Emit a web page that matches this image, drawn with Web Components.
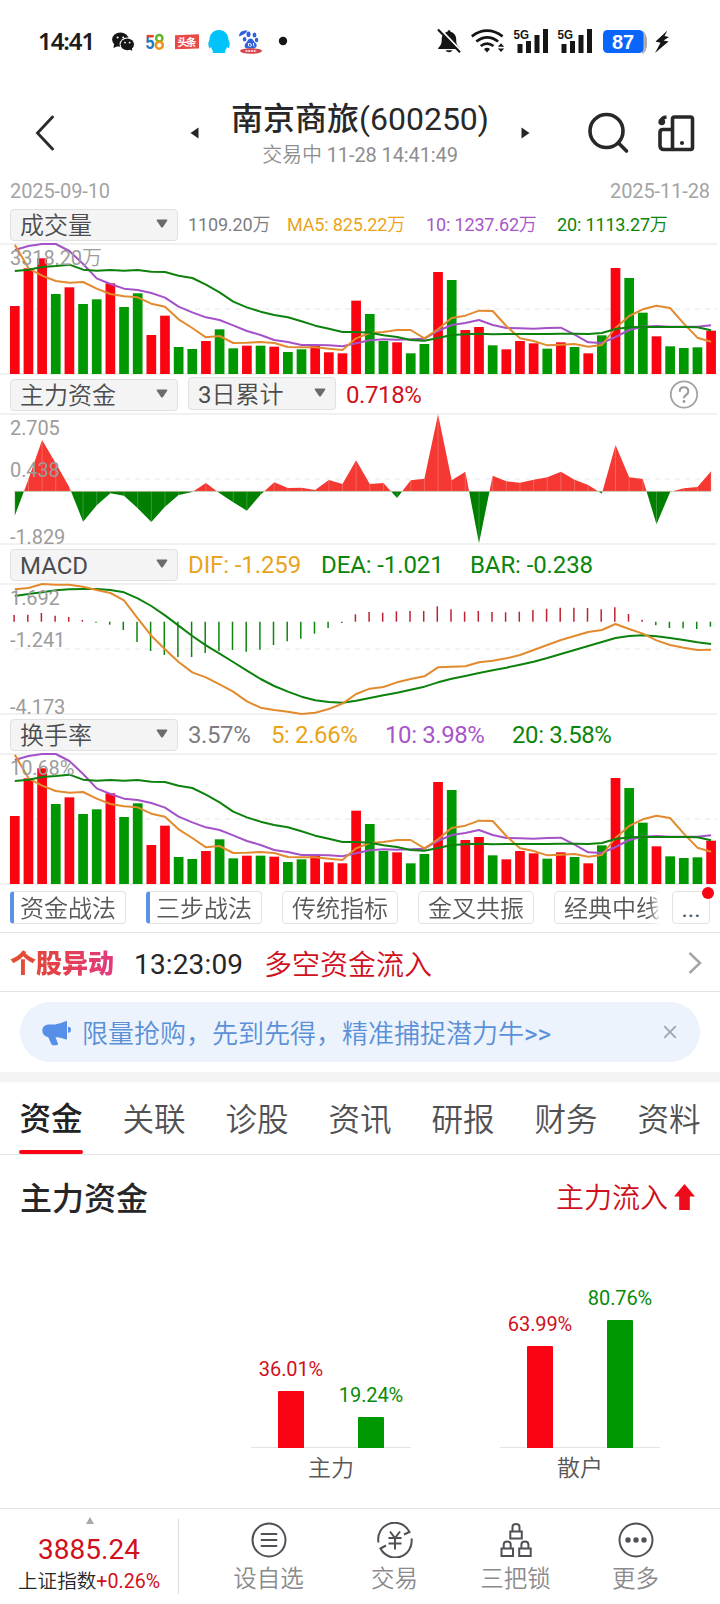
<!DOCTYPE html>
<html lang="zh-CN">
<head>
<meta charset="utf-8">
<title>南京商旅(600250)</title>
<style>
html,body{margin:0;padding:0;background:#fff}
body{width:720px;height:1604px;overflow:hidden;font-family:Roboto,"Noto Sans CJK SC DemiLight","Noto Sans CJK SC Light","Noto Sans CJK SC",sans-serif;color:#262628;-webkit-font-smoothing:antialiased}
</style>
</head>
<body>
<stock-page></stock-page>
<script>
const define = (name, css, html, after) => customElements.define(name, class extends HTMLElement {
  connectedCallback() {
    if (this.shadowRoot) return;
    const root = this.attachShadow({ mode: 'open' });
    const body = typeof html === 'function' ? html(this) : html;
    root.innerHTML = `<style>*{box-sizing:border-box}${css}</style>${body}`;
    if (after) after(root, this);
  }
});

/* ---------- series ---------- */
const STEP = 13.653, X0 = 14.8;
const nums = s => s.trim().split(/[\s,]+/).map(Number);
const VOL = 'R318 R205 R175 G282 R262 G312 G298 R250 G321 G280 R405 R347 G441 G447 R423 G388 G445 R437 G437 R440 G456 G448 R436 R457 R460 R302 G342 G423 R427 G460 G432 R216 G240 R390 R381 G436 R448 R423 R430 G446 R427 G441 R460 G406 R204 G234 G338 R409 G439 G444 G442 R392'.split(' ');
const MA5 = nums('134 205 227 243 248 246 266 282 289 292 311 320 358 384 412 408 429 428 426 429 441 442 442 446 450 415 399 396 390 390 415 388 354 347 332 333 378 415 423 436 434 432 440 435 384 348 328 317 324 371 413 425');
const MA10 = nums('150 138 132 132 153 192 235 252 266 270 279 293 320 337 352 360 376 393 405 420 426 435 435 436 439 430 421 418 419 418 416 393 375 369 360 375 384 385 386 384 383 404 427 429 411 390 380 378 380 380 380 376');
const MA20 = nums('213 209 201 198 194 209 212 210 212 210 215 216 227 234 254 277 305 322 335 345 352 364 377 386 396 396 398 406 411 420 422 414 405 403 401 403 402 402 402 402 401 401 402 399 387 382 381 381 381 381 382 391');
const FLOW = nums('422 313 195 265 337 440 391 355 362 400 441 395 360 351 324 355 382 407 359 322 339 338 345 315 327 256 327 324 369 316 311 118 316 290 505 302 319 323 314 307 290 314 330 356 210 307 312 448 351 340 336 289');
const HIST = nums('105 104 99 107 111 120 128 134 150 186 213 225 231 231 219 213 210 215 209 195 184 176 161 144 129 103 96 98 94 93 93 79 88 95 93 96 97 95 90 86 83 83 84 88 82 102 119 136 144 145 147 140');
const DIF = nums('28 24 12 14 14 20 30 39 61 115 167 208 246 277 292 313 335 364 383 390 395 402 398 387 371 342 326 321 307 297 289 262 260 259 247 242 235 225 210 195 180 168 156 150 132 147 161 181 195 203 210 209');
const DEA = nums('48 42 37 31 28 27 27 30 37 55 78 106 137 168 196 221 246 272 297 318 335 350 361 366 368 362 354 346 338 329 320 307 296 288 279 271 263 254 245 234 222 210 198 186 174 168 166 169 174 180 187 192');
const px = i => X0 + STEP * i;
const line = (a, off, c) => `<polyline fill="none" stroke="${c}" stroke-width="2" stroke-linejoin="round" points="${a.map((v, i) => px(i).toFixed(1) + ',' + (v / 3 - off).toFixed(2)).join(' ')}"/>`;
const ORANGE = '#e28b2e', PURPLE = '#a552c8', GREEN = '#0c820c';

const drawings = {
  volume() {
    return VOL.map((v, i) => { const y = +v.slice(1) / 3 - 44; return `<rect x="${(px(i) - 4.85).toFixed(2)}" y="${y.toFixed(2)}" width="9.7" height="${(130 - y).toFixed(2)}" fill="${v[0] === 'R' ? '#fa0412' : '#009800'}"/>`; }).join('')
      + line(MA10, 44, PURPLE) + line(MA5, 44, ORANGE) + line(MA20, 44, GREEN);
  },
  flow() {
    const z = 349 / 3 - 39, pts = FLOW.map((v, i) => [px(i), v / 3 - 39]);
    const area = pts.map(p => p[0].toFixed(2) + ',' + p[1].toFixed(2)).join(' ');
    const poly = `${px(0)},${z} ${area} ${px(51)},${z}`;
    const hair = pts.map(p => `<path d="M${p[0].toFixed(2)} ${z}V${p[1].toFixed(2)}" stroke="#fff" stroke-opacity=".28" stroke-width=".8"/>`).join('');
    return `<defs><clipPath id="up"><rect width="720" height="${z}"/></clipPath><clipPath id="dn"><rect y="${z}" width="720" height="60"/></clipPath></defs>
      <polygon points="${poly}" fill="#f53831" clip-path="url(#up)"/><polygon points="${poly}" fill="#007f00" clip-path="url(#dn)"/>${hair}
      <path d="M14 ${z}H711" stroke="#c9b9a8" stroke-width=".5"/>`;
  },
  macd() {
    const z = 125 / 3 - 4;
    return HIST.map((v, i) => { const y = v / 3 - 4; return `<path d="M${(px(i) - .7).toFixed(1)} ${z.toFixed(1)}V${y.toFixed(1)}" stroke="${v < 125 ? '#bd2230' : '#0c860c'}" stroke-width="1.5"/>`; }).join('') + line(DEA, 4, GREEN) + line(DIF, 4, ORANGE);
  }
};

/* ---------- small parts ---------- */
define('chart-canvas', `
  :host{display:block;position:relative;height:130px}
  svg{display:block;position:absolute;left:0;top:-2px;overflow:visible}
  span{position:absolute;left:10px;font-size:20px;line-height:24px;color:#9c9c9c;letter-spacing:-.1px}`,
  el => {
    const l = (el.getAttribute('labels') || '').split('|'), tops = [1.5, 44, 111];
    return `<svg width="720" height="132" viewBox="0 -2 720 132">
      <path d="M0 0H717M0 130H717" stroke="#f1f1f1" stroke-width="2"/>
      <path d="M15 65H717" stroke="#f0f0f0" stroke-width="1.6" stroke-dasharray="5 5"/>
      ${drawings[el.getAttribute('type')]()}</svg>` + l.map((t, i) => `<span style="top:${tops[i]}px">${t}</span>`).join('');
  });

define('select-box', `
  :host{display:flex;align-items:center;justify-content:space-between;width:168px;height:32px;box-sizing:border-box;
    padding:3px 9px 0 9px;background:#f4f4f4;border:1px solid #e0e0e0;border-radius:4px;font-size:24px;line-height:30px;color:#4c4c4e;flex:none}
  svg{margin-top:-5px;flex:none}`,
  `<span><slot></slot></span><svg width="12" height="9" viewBox="0 0 12 9"><path d="M1.2.5h9.6q1 .3.4 1.2L7 7.9q-1 1-2 0L.8 1.700Q.2.8 1.200.5z" fill="#6b6b6d"/></svg>`);

define('value-text', `
  :host{display:block;flex:0 0 auto;white-space:nowrap;font-size:24px;line-height:30px;letter-spacing:-.1px;color:var(--c,#7d7d7f)}`, `<slot></slot>`);

define('indicator-panel', `
  :host{display:block;height:170px;position:relative}
  header{display:flex;align-items:center;height:40px;padding:1px 0 0 10px}
  .legend{display:flex;flex:1;align-items:center;padding-left:10px;height:32px}`,
  el => `<header><select-box>${el.getAttribute('name')}</select-box><div class="legend"><slot></slot></div></header>
    <chart-canvas type="${el.getAttribute('type')}" labels="${el.getAttribute('labels')}"></chart-canvas>`);

define('status-bar', `
  :host{display:flex;height:84px;position:relative;align-items:flex-start;padding:30px 0 0 38px}
  .t{font:600 24px/22px "Noto Sans",Roboto,sans-serif;width:74px;letter-spacing:-1.1px;color:#1c1c1e}
  svg{display:block;flex:none}
  text{font-family:"Liberation Sans","Noto Sans CJK SC",sans-serif}`,
  `<div class="t">14:41</div>
  <svg width="180" height="30" viewBox="112 30 180 30">
    <g fill="#161616"><ellipse cx="120.400" cy="39.600" rx="8.300" ry="7.200"/><path d="M114 44l-.5 4 4.500-2z"/></g>
    <ellipse cx="127.200" cy="44.300" rx="7.600" ry="6.700" fill="#fff"/>
    <g fill="#161616"><ellipse cx="127.300" cy="44.300" rx="6.700" ry="5.900"/><path d="M129 49l3.200 2-.4-4z"/></g>
    <g fill="#fff"><circle cx="117.600" cy="37.400" r="1"/><circle cx="123.200" cy="37.400" r="1"/><circle cx="125" cy="42.600" r=".9"/><circle cx="129.600" cy="42.600" r=".9"/></g>
    <text x="145.400" y="48.800" font-size="19.500" font-weight="700" fill="#1f7bbf" textLength="9" lengthAdjust="spacingAndGlyphs">5</text>
    <path d="M146.800 36.200h6.700" stroke="#e8402c" stroke-width="2.600"/>
    <circle cx="159.300" cy="38.200" r="3.200" fill="none" stroke="#5fb82c" stroke-width="2.500"/><circle cx="159.300" cy="45.200" r="3.500" fill="none" stroke="#f39019" stroke-width="2.500"/>
    <path d="M175 35.200l24-1v14.200l-24 .9z" fill="#e94a48"/>
    <text x="177.500" y="46.300" font-size="10.500" font-weight="700" fill="#fff" textLength="19">头条</text>
    <path d="M219 30c-6 0-9.500 4.500-9.500 10-1 2-1.500 3.500-1 5.500.4 2 .6 3 1.300 2.800l1.200-1.500c.4 2 1.300 3.200 2.200 4.200-1 .8-1 2 .3 2h11c1.300 0 1.300-1.200.3-2 .9-1 1.800-2.200 2.200-4.200l1.200 1.500c.7.2.9-.8 1.300-2.800.5-2 0-3.500-1-5.500 0-5.500-3.500-10-9.500-10z" fill="#00c3fb"/>
    <g fill="#2f62dc"><ellipse cx="248.500" cy="34.300" rx="2" ry="2.800"/><ellipse cx="254.500" cy="35" rx="1.900" ry="2.600"/><ellipse cx="244.600" cy="39.300" rx="1.800" ry="2.300"/><ellipse cx="256.600" cy="40" rx="1.700" ry="2.300"/><path d="M250.500 38.500c2.600 0 3 3 5.500 5 2 3-.5 5-3 5h-5c-3 0-4.500-2-2.500-5 2.200-2 2.500-5 5-5z"/><path d="M239 36.500c0-4.500 3.500-6.500 8.500-6-1.500 3-4 4.500-8.500 6z"/></g>
    <path d="M248.500 43.200v3M249 43.500q2.500 0 2.500 1.500t-2 1.500M253.500 43v2.200q0 1 1 1" fill="none" stroke="#fff" stroke-width=".9"/>
    <ellipse cx="251" cy="51" rx="11" ry="2.700" fill="#d9434b"/><path d="M245.500 51h11" stroke="#fff" stroke-width="1.500" stroke-dasharray="2 .7"/>
    <circle cx="283" cy="41" r="4.200" fill="#161616"/>
  </svg>
  <svg style="margin:-8px 0 0 144px" width="250" height="38" viewBox="436 18 250 38">
    <g transform="translate(0,-4)" fill="#161616">
    <path d="M449 30.300c1 0 1.500.7 1.500 1.500 3.800 1 5.700 4 5.700 7.700 0 3.500.5 5.500 3.500 8.500v1h-21.500v-1c3-3 3.500-5 3.500-8.500 0-3.700 2-6.700 5.800-7.700 0-.8.500-1.500 1.500-1.500z"/><path d="M445.500 50.200h7q-1 2-3.500 2t-3.500-2z"/><path d="M439.500 28.500l22 23" stroke="#fff" stroke-width="2.200"/><path d="M438 29.500l22 22.800" stroke="#161616" stroke-width="2.200"/>
    <g fill="none" stroke="#161616" stroke-width="2.700"><path d="M471.800 36.300q15.200-11.300 30.800 0M476.300 41.500q11-8.300 21.800 0M480.700 46q6.300-4.600 12.800 0"/></g><path d="M487 52.600l-3-3.600q3-2.400 6 0z"/><path d="M501 43.200l3.200 3.600h-6.400zM501 52l3.200-3.600h-6.400z"/>
    </g>
    <g fill="#161616"><text x="513.500" y="34.600" font-size="13.500" font-weight="700" textLength="15.500" lengthAdjust="spacingAndGlyphs">5G</text><text x="557.500" y="34.600" font-size="13.500" font-weight="700" textLength="15.500" lengthAdjust="spacingAndGlyphs">5G</text>
    <path d="M517.500 40h5v9h-5zM526 37h5v12h-5zM534.500 31h5v18h-5zM543 25h5v24h-5zM561.500 40h5v9h-5zM570 37h5v12h-5zM578.500 31h5v18h-5zM587 25h5v24h-5z"/></g>
    <path d="M642 27q5 1 5 11.500T642 50z" fill="#b5b5b5"/><path d="M645 32q2 0 2 6.500t-2 6z" fill="#a9a9a9"/>
    <rect x="603" y="26" width="40.500" height="23" rx="4.500" fill="#0a66fb"/>
    <text x="612" y="45.200" font-size="20" font-weight="700" fill="#fff">87</text>
    <path d="M667.500 26.500l-12 11 5 1.200-5.500 10.300 13.500-11.500-5-1 5.500-3.500-4.500-1z" fill="#161616"/>
  </svg>`);

define('stock-header', `
  :host{display:flex;height:94px;position:relative;padding-left:34px;align-items:flex-start}
  .mid{display:flex;align-items:flex-start;margin-left:134px;width:340px}
  .back{margin-top:31px}.mid svg{margin-top:43px}
  .c{width:322px;text-align:center;white-space:nowrap;flex:none}
  h1{margin:16px 0 0;font-size:32px;line-height:38px;font-weight:450;font-family:Roboto,"Noto Sans CJK SC",sans-serif;color:#28282a}
  p{margin:5px 0 0;font-size:20px;line-height:24px;letter-spacing:-.1px;color:#8e8e90}
  .ic{margin:27px 0 0 56px}
  svg{display:block;flex:none}`,
  `<svg class="back" width="22" height="36" viewBox="34 115 22 36"><path d="M52.500 117L37.500 133l15 16" fill="none" stroke="#2b2b2d" stroke-width="2.900" stroke-linecap="round"/></svg>
  <div class="mid"><svg width="9" height="12" viewBox="0 0 9 12"><path d="M8.500.5v11L.5 6z" fill="#262628"/></svg>
  <div class="c"><h1>南京商旅(600250)</h1><p>交易中 11-28 14:41:49</p></div>
  <svg width="9" height="12" viewBox="0 0 9 12"><path d="M.5.5v11L8.500 6z" fill="#262628"/></svg></div>
  <svg class="ic" width="110" height="46" viewBox="586 111 110 46"><g fill="none" stroke="#28282a" stroke-width="3.600">
    <circle cx="606.500" cy="131" r="16.500"/><path d="M618.500 143l8 8" stroke-linecap="round"/>
    <rect x="672.500" y="117" width="20" height="32.500" rx="2"/><path d="M671 129.500h-8q-3 0-3 3v13q0 4 4 4h10M660.500 123.500q0-6 6-6.500"/></g><circle cx="661.800" cy="121.800" r="3.400" fill="#28282a"/><circle cx="682" cy="143" r="2.100" fill="#28282a"/></svg>`);

define('date-range', `:host{display:flex;justify-content:space-between;height:26px;padding:1px 10px 0;font-size:20px;line-height:24px;letter-spacing:-.1px;color:#a4a4a4}`,
  `<span>2025-09-10</span><span>2025-11-28</span>`);

define('help-icon', `:host{display:block;margin-left:auto;margin-right:21px}svg{display:block}`,
  `<svg width="30" height="30" viewBox="669 379.500 30 30"><circle cx="684" cy="394" r="13.200" fill="none" stroke="#a3a3a3" stroke-width="1.800"/><path d="M679.700 391.200q0-4.400 4.300-4.400t4.300 4.200q0 2-2.200 3.400t-2.100 3.300" fill="none" stroke="#999" stroke-width="2"/><circle cx="684" cy="401" r="1.400" fill="#999"/></svg>`);

define('chip-item', `
  :host{display:block;flex:0 0 116px;width:116px;height:33px;border:1px solid #e2e2e2;border-radius:4px;box-sizing:border-box;padding-left:9px;font-size:24px;line-height:34px;color:#58585a;white-space:nowrap;overflow:hidden}
  :host([hot]){border-left:4px solid #5a93e6;padding-left:6px}
  :host([more]){flex-basis:38px;width:38px;padding:0;text-align:center;line-height:34px}`, `<slot></slot>`);

define('strategy-chips', `
  :host{display:flex;height:49px;padding:7px 10px 0;border-bottom:1px solid #e2e2e2;position:relative;justify-content:space-between;box-sizing:border-box}
  .row{display:flex;gap:20px;width:652px;overflow:hidden;-webkit-mask:linear-gradient(90deg,#000 639px,transparent 651px);mask:linear-gradient(90deg,#000 639px,transparent 651px)}
  i{position:absolute;width:12px;height:12px;border-radius:50%;background:#fa0414;left:702px;top:3px}`,
  `<div class="row"><chip-item hot>资金战法</chip-item><chip-item hot>三步战法</chip-item><chip-item>传统指标</chip-item><chip-item>金叉共振</chip-item><chip-item>经典中线</chip-item></div><chip-item more>...</chip-item><i></i>`);

define('event-row', `
  :host{display:flex;align-items:center;height:59px;border-bottom:1px solid #e2e2e2;padding:0 18px 0 10px;box-sizing:border-box;font-size:28px;line-height:36px}
  b{font-size:26px;font-weight:900;font-family:"Noto Sans CJK SC",sans-serif;width:124px;background:linear-gradient(90deg,#e2502f,#e2404c 50px,#e33a80 104px);-webkit-background-clip:text;background-clip:text;color:transparent;margin-top:0}
  time{width:130px;letter-spacing:.15px;margin-top:6px}span{color:#d0101c;flex:1;margin-top:8px}svg{display:block;margin-top:1px}`,
  `<b>个股异动</b><time>13:23:09</time><span>多空资金流入</span><svg width="14" height="24" viewBox="0 0 14 24"><path d="M1.500 2l10.500 10L1.500 22" fill="none" stroke="#a6a6a6" stroke-width="2.500"/></svg>`);

define('promo-banner', `
  :host{display:flex;align-items:center;height:60px;margin:10px 20px;border-radius:30px;background:#ecf3fc;padding:0 23px 0 22px;box-sizing:border-box;font-size:26px;line-height:34px;color:#5a90d8;white-space:nowrap}
  span{flex:1;margin:3px 0 0 11px}svg{display:block}`,
  `<svg style="margin-top:3px" width="29" height="26" viewBox="42 1020 29 26"><path d="M48 1023.500h7q6-1 11-3.500 1-.3 1 1v16.500q0 1.300-1 1-3.500-1.500-8-2.300l-2.500 0 2.300 6q.5 2-1.500 2h-3q-1.500 0-2-1.300l-3-6.700q-6-1.700-6-6.500 0-5.500 5.700-6.200z" fill="#568fe8"/><path d="M68 1025.700q3 0 3 3t-3 3z" fill="#568fe8"/></svg>
  <span>限量抢购，先到先得，精准捕捉潜力牛&gt;&gt;</span>
  <svg width="14" height="14" viewBox="0 0 14 14"><path d="M1.200 1.200l11.600 11.600M12.800 1.200L1.200 12.800" stroke="#a2a7ad" stroke-width="1.900"/></svg>`);

define('tab-bar', `
  :host{display:flex;height:83px;border-top:10px solid #f4f4f4;border-bottom:1px solid #e2e2e2;padding:0 19px 0 19px;justify-content:space-between;box-sizing:border-box;font-size:31.600px;line-height:40px;color:#515153}
  span{height:72px;padding-top:19px;width:64px;text-align:center}
  .on{font-weight:500;font-family:Roboto,"Noto Sans CJK SC",sans-serif;color:#222224;display:flex;flex-direction:column;justify-content:space-between;padding-top:18px}
  .on::after{content:"";height:4px;border-radius:2px;background:#fa0414}`,
  `<span class="on">资金</span><span>关联</span><span>诊股</span><span>资讯</span><span>研报</span><span>财务</span><span>资料</span>`);

define('bar-pair', `
  :host{display:grid;grid-template-rows:1fr auto;width:160px;height:200px}
  .bars{display:flex;justify-content:space-between;align-items:flex-end;padding:0 27px;border-bottom:1px solid #e4e4e4}
  .col{width:26px;display:flex;flex-direction:column;align-items:center;font-size:20px;line-height:24px;white-space:nowrap;letter-spacing:-.1px;margin-bottom:-1px}
  .col i{display:block;width:26px;margin-top:10px;border-radius:1px 1px 0 0}
  .col span{display:flex;justify-content:center;width:26px}
  .r{color:#d0101c}.r i{background:#fa0414}.g{color:#098a09}.g i{background:#009800}
  p{margin:4px 0 0;text-align:center;font-size:23px;line-height:34px;color:#58585a}`,
  el => `<div class="bars"><div class="col r"><span>${el.getAttribute('a')}</span><i style="height:${el.getAttribute('ah')}px"></i></div><div class="col g"><span>${el.getAttribute('b')}</span><i style="height:${el.getAttribute('bh')}px"></i></div></div><p>${el.getAttribute('name')}</p>`);

define('fund-section', `
  :host{display:block;height:353px}
  header{display:flex;justify-content:space-between;align-items:center;padding:22px 25px 0 20px;height:66px}
  h2{margin:0;font-size:32px;line-height:40px;font-weight:500;font-family:Roboto,"Noto Sans CJK SC",sans-serif;color:#262628}
  .in{display:flex;align-items:center;gap:6px;font-size:28px;line-height:36px;color:#d0101c}
  svg{display:block;margin-top:-4px}
  .g{display:flex;gap:89px;padding:65px 0 0 251px}`,
  `<header><h2>主力资金</h2><div class="in">主力流入<svg width="21" height="26" viewBox="0 0 21 26"><path d="M10.500 0L21 12.500h-5.200V26H5.200V12.500H0z" fill="#ee0a18"/></svg></div></header>
  <div class="g"><bar-pair name="主力" a="36.01%" ah="57" b="19.24%" bh="31"></bar-pair><bar-pair name="散户" a="63.99%" ah="102" b="80.76%" bh="128"></bar-pair></div>`);

define('nav-item', `
  :host{display:flex;flex-direction:column;align-items:center;padding-top:13px;font-size:23.500px;line-height:30px;color:#8b8b8d;box-sizing:border-box}
  ::slotted(svg){display:block;margin-bottom:6px}`, `<slot></slot>`);

define('bottom-nav', `
  :host{display:flex;height:96px;border-top:1px solid #e2e2e2;box-sizing:border-box}
  .idx{width:179px;display:flex;flex-direction:column;align-items:center;position:relative;padding-top:8px}
  .idx::after{content:"";position:absolute;right:0;top:10px;height:75px;width:1px;background:#dedede}
  strong{font-weight:400;font-size:28px;line-height:32px;margin:10px 1px 0 0;color:#d0101c}
  p{margin:2px 1px 0 0;font-size:19.600px;line-height:28px;color:#262628;white-space:nowrap}p em{font-style:normal;color:#d0101c}
  svg{display:block}g{fill:none;stroke:#505157;stroke-width:2}
  nav{display:flex;padding-left:27px}`,
  `<div class="idx"><svg width="8" height="7" viewBox="0 0 8 7"><path d="M4 0l4 7H0z" fill="#a8a8a8"/></svg><strong>3885.24</strong><p>上证指数<em>+0.26%</em></p></div>
  <nav>
  <nav-item style="width:125px"><svg width="36" height="36" viewBox="-18 -18 36 36"><g><circle r="16.500"/><path d="M-8.200-6H8.200M-8.200 0H8.200M-8.200 6H8.200" stroke-width="2.200"/></g></svg>设自选</nav-item>
  <nav-item style="width:127px"><svg width="36" height="36" viewBox="-18 -18 36 36"><g><path d="M-16.500 2.500A16.500 16.500 0 0 1 14.500-8L9-5.500M16.500-1.500A16.500 16.500 0 0 1-14.500 8.500L-9 5.500"/><path d="M-5-8.500L0-2 5-8.500M-6.500-2H6.500M-6.500 3.500H6.500M0-2V9.500"/></g></svg>交易</nav-item>
  <nav-item style="width:115px"><svg width="36" height="36" viewBox="-18 -18 36 36"><g stroke-width="2.200"><rect x="-5.700" y="-8.500" width="11.500" height="7"/><path d="M-3.500-9v-4q0-3 3.500-3t3.500 3v4"/><rect x="-14.500" y="8.500" width="11.500" height="7.500"/><path d="M-12.300 8v-3.500q0-3 3.500-3t3.500 3v3.500"/><rect x="3.200" y="8.500" width="11.500" height="7.500"/><path d="M5.400 8v-3.500q0-3 3.500-3t3.500 3v3.500"/></g></svg>三把锁</nav-item>
  <nav-item style="width:125px"><svg width="36" height="36" viewBox="-18 -18 36 36"><g><circle r="16.500"/></g><path d="M-8 0h0M0 0h0M8 0h0" stroke="#505157" stroke-width="5.400" stroke-linecap="round"/></svg>更多</nav-item></nav>`);

define('stock-page', `
  :host{display:block;width:720px}
  .s{font-size:18px;letter-spacing:-.15px}
  .pct{letter-spacing:-.4px}
  .gold{--c:#e9a41c}.pur{--c:#a855c9}.grn{--c:#0b850b}.red{--c:#d0101c}`,
  `<status-bar></status-bar><stock-header></stock-header><date-range></date-range>
  <indicator-panel name="成交量" type="volume" labels="3318.20万">
    <value-text class="s" style="width:99px">1109.20万</value-text><value-text class="s gold" style="width:139px">MA5: 825.22万</value-text><value-text class="s pur" style="width:131px">10: 1237.62万</value-text><value-text class="s grn">20: 1113.27万</value-text>
  </indicator-panel>
  <indicator-panel name="主力资金" type="flow" labels="2.705|0.438|-1.829">
    <select-box style="width:148px;height:33px;margin:-2px 10px 0 0">3日累计</select-box><value-text class="red pct">0.718%</value-text><help-icon></help-icon>
  </indicator-panel>
  <indicator-panel name="MACD" type="macd" labels="1.692|-1.241|-4.173">
    <value-text class="gold" style="width:133px">DIF: -1.259</value-text><value-text class="grn" style="width:149px">DEA: -1.021</value-text><value-text class="grn">BAR: -0.238</value-text>
  </indicator-panel>
  <indicator-panel name="换手率" type="volume" labels="10.68%">
    <value-text class="pct" style="width:83px">3.57%</value-text><value-text class="gold pct" style="width:114px">5: 2.66%</value-text><value-text class="pur pct" style="width:127px">10: 3.98%</value-text><value-text class="grn pct">20: 3.58%</value-text>
  </indicator-panel>
  <strategy-chips></strategy-chips><event-row></event-row><promo-banner></promo-banner><tab-bar></tab-bar><fund-section></fund-section><bottom-nav></bottom-nav>`);
</script>
</body>
</html>
